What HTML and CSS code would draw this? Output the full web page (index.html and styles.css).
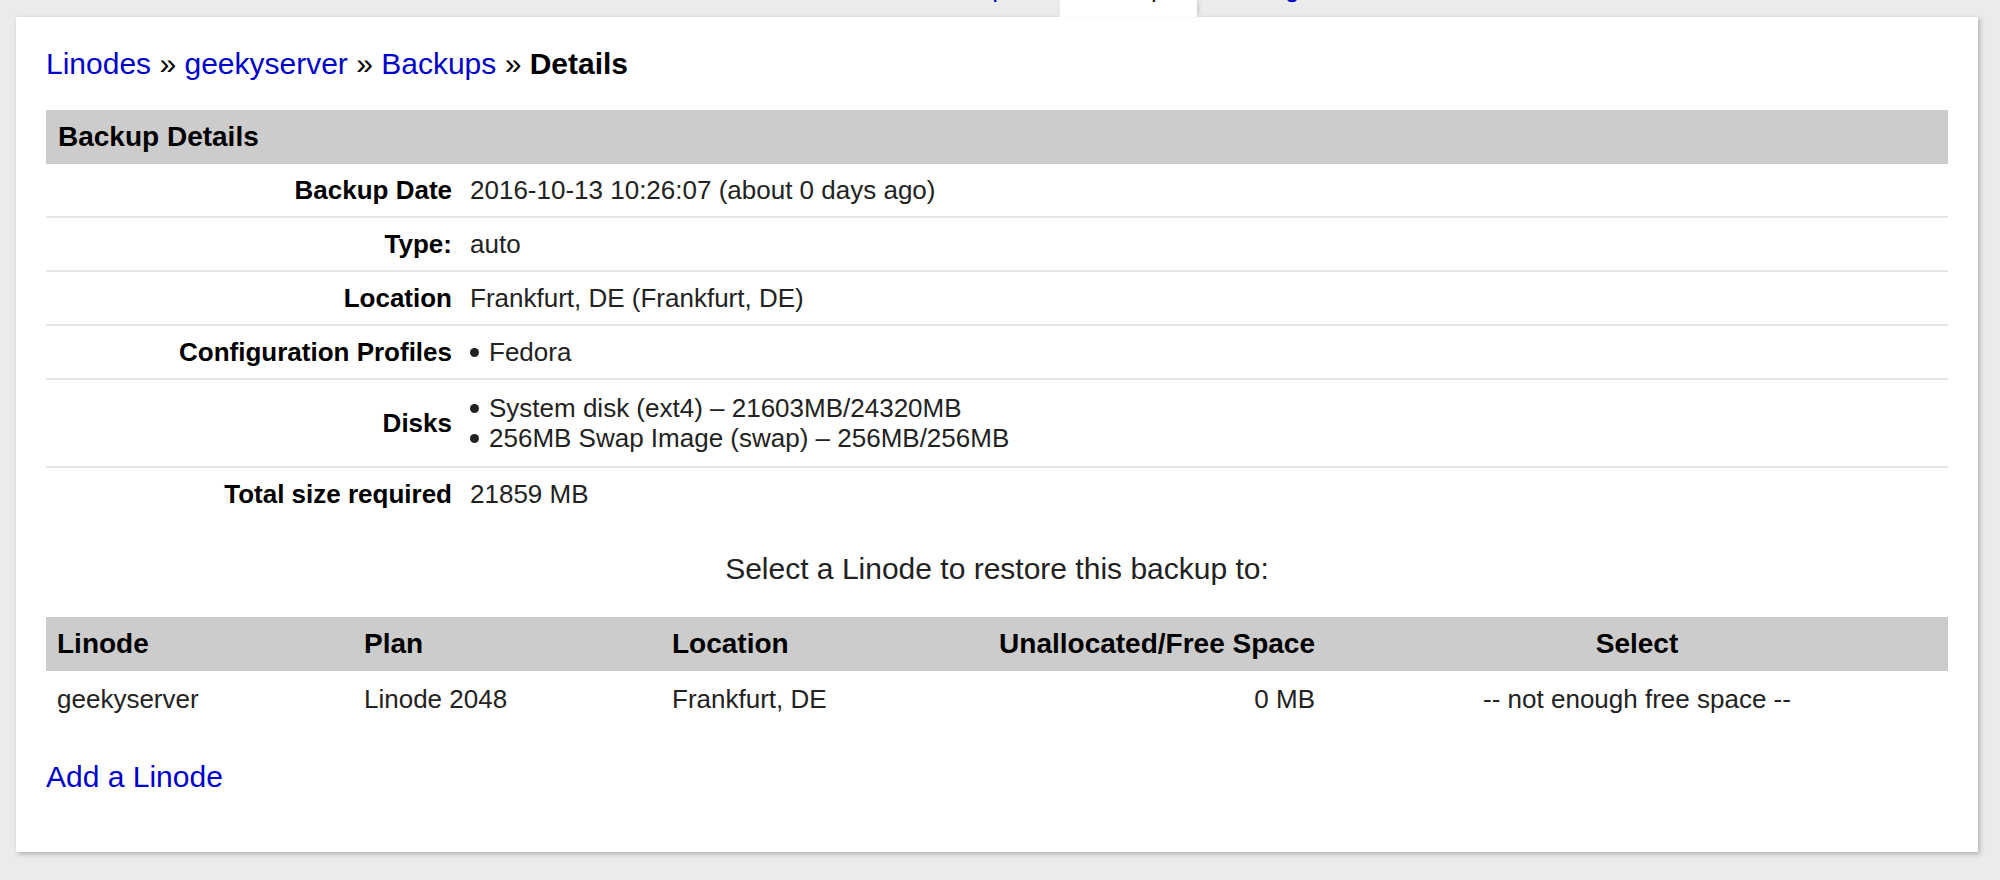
FILE: index.html
```html
<!DOCTYPE html>
<html>
<head>
<meta charset="utf-8">
<title>Backup Details</title>
<link rel="stylesheet" href="styles.css">
</head>
<body>
<div class="tabs">
  <div class="tab"><span class="tab-label">Graphs</span></div>
  <div class="tab tab-active"><span class="tab-label">Backups</span></div>
  <div class="tab"><span class="tab-label">Settings</span></div>
</div>
<div class="card">
  <div class="crumbs">
    <a href="#">Linodes</a> » <a href="#">geekyserver</a> » <a href="#">Backups</a> » <b>Details</b>
  </div>

  <table class="details">
    <thead>
      <tr><th colspan="2" class="section-head">Backup Details</th></tr>
    </thead>
    <tbody>
      <tr><td class="label">Backup Date</td><td class="value">2016-10-13 10:26:07 (about 0 days ago)</td></tr>
      <tr><td class="label">Type:</td><td class="value">auto</td></tr>
      <tr><td class="label">Location</td><td class="value">Frankfurt, DE (Frankfurt, DE)</td></tr>
      <tr><td class="label">Configuration Profiles</td><td class="value"><ul class="bullets"><li>Fedora</li></ul></td></tr>
      <tr class="multi"><td class="label">Disks</td><td class="value"><ul class="bullets"><li>System disk (ext4) – 21603MB/24320MB</li><li>256MB Swap Image (swap) – 256MB/256MB</li></ul></td></tr>
      <tr class="last"><td class="label">Total size required</td><td class="value">21859 MB</td></tr>
    </tbody>
  </table>

  <p class="prompt">Select a Linode to restore this backup to:</p>

  <table class="restore">
    <colgroup>
      <col class="c-linode"><col class="c-plan"><col class="c-loc"><col class="c-free"><col class="c-select">
    </colgroup>
    <thead>
      <tr>
        <th>Linode</th>
        <th>Plan</th>
        <th>Location</th>
        <th class="right">Unallocated/Free Space</th>
        <th class="center">Select</th>
      </tr>
    </thead>
    <tbody>
      <tr>
        <td>geekyserver</td>
        <td>Linode 2048</td>
        <td>Frankfurt, DE</td>
        <td class="right">0 MB</td>
        <td class="center">-- not enough free space --</td>
      </tr>
    </tbody>
  </table>

  <p class="add"><a href="#">Add a Linode</a></p>
</div>
</body>
</html>
```

FILE: styles.css
```css
html, body {
  margin: 0;
  padding: 0;
}
body {
  background: #ebebeb;
  font-family: "Liberation Sans", Arial, Helvetica, sans-serif;
  color: #333;
  width: 2000px;
  height: 880px;
  overflow: hidden;
}
a {
  color: #0000cc;
  text-decoration: none;
}

.tabs {
  display: flex;
  height: 17px;
  padding-left: 923px;
}
.tab {
  width: 137px;
  height: 17px;
  overflow: visible;
  text-align: center;
  font-size: 26px;
  color: #0000cc;
}
.tab-active {
  background: #ffffff;
  color: #222;
  box-shadow: 3px 0 4px -2px rgba(0,0,0,0.18);
  position: relative;
  z-index: 2;
}
.tab-label {
  display: block;
  line-height: 26px;
  margin-top: -25px;
}

.card {
  margin: 0 22px 0 16px;
  background: #fff;
  padding: 30px 30px 58px 30px;
  box-shadow: 2px 2px 5px rgba(0,0,0,0.25);
  position: relative;
  z-index: 1;
}

.crumbs {
  font-size: 30px;
  line-height: 34px;
  color: #000;
  margin-bottom: 29px;
}
.crumbs b {
  color: #000;
}

table {
  border-collapse: collapse;
  width: 100%;
}

.details .section-head {
  background: #cccccc;
  color: #000;
  font-size: 28px;
  font-weight: bold;
  text-align: left;
  height: 54px;
  padding: 0 12px;
  box-sizing: border-box;
  line-height: 32px;
}
.details td {
  font-size: 26px;
  line-height: 30px;
  padding-top: 11px;
  padding-bottom: 11px;
  border-bottom: 2px solid #e6e6e6;
  vertical-align: middle;
}
.details tr.multi td {
  padding-top: 13px;
  padding-bottom: 13px;
}
.details tr.last td {
  border-bottom: none;
}
.details td.label {
  width: 406px;
  text-align: right;
  font-weight: bold;
  color: #000;
  padding-left: 0;
  padding-right: 13px;
}
.details td.value {
  color: #222;
  padding-left: 5px;
  padding-right: 0;
}

.bullets {
  list-style: none;
  margin: 0;
  padding: 0;
}
.bullets li {
  display: flex;
  align-items: center;
}
.bullets li::before {
  content: "";
  width: 9px;
  height: 9px;
  border-radius: 50%;
  background: #222;
  margin: 0 10px 0 0;
  flex: none;
}

.prompt {
  font-size: 30px;
  line-height: 34px;
  text-align: center;
  margin: 32px 0 31px 0;
  color: #222;
}

.restore {
  table-layout: fixed;
}
.c-linode { width: 307px; }
.c-plan { width: 308px; }
.c-loc { width: 308px; }
.c-free { width: 357px; }
.c-select { width: auto; }

.restore th {
  background: #cccccc;
  color: #000;
  font-size: 28px;
  font-weight: bold;
  text-align: left;
  height: 54px;
  padding: 0 11px;
  box-sizing: border-box;
  line-height: 32px;
}
.restore td {
  font-size: 26px;
  line-height: 30px;
  padding: 13px 11px;
  color: #222;
}
.restore .right { text-align: right; }
.restore .center { text-align: center; }

.add {
  font-size: 30px;
  line-height: 34px;
  margin: 33px 0 0 0;
}
```
